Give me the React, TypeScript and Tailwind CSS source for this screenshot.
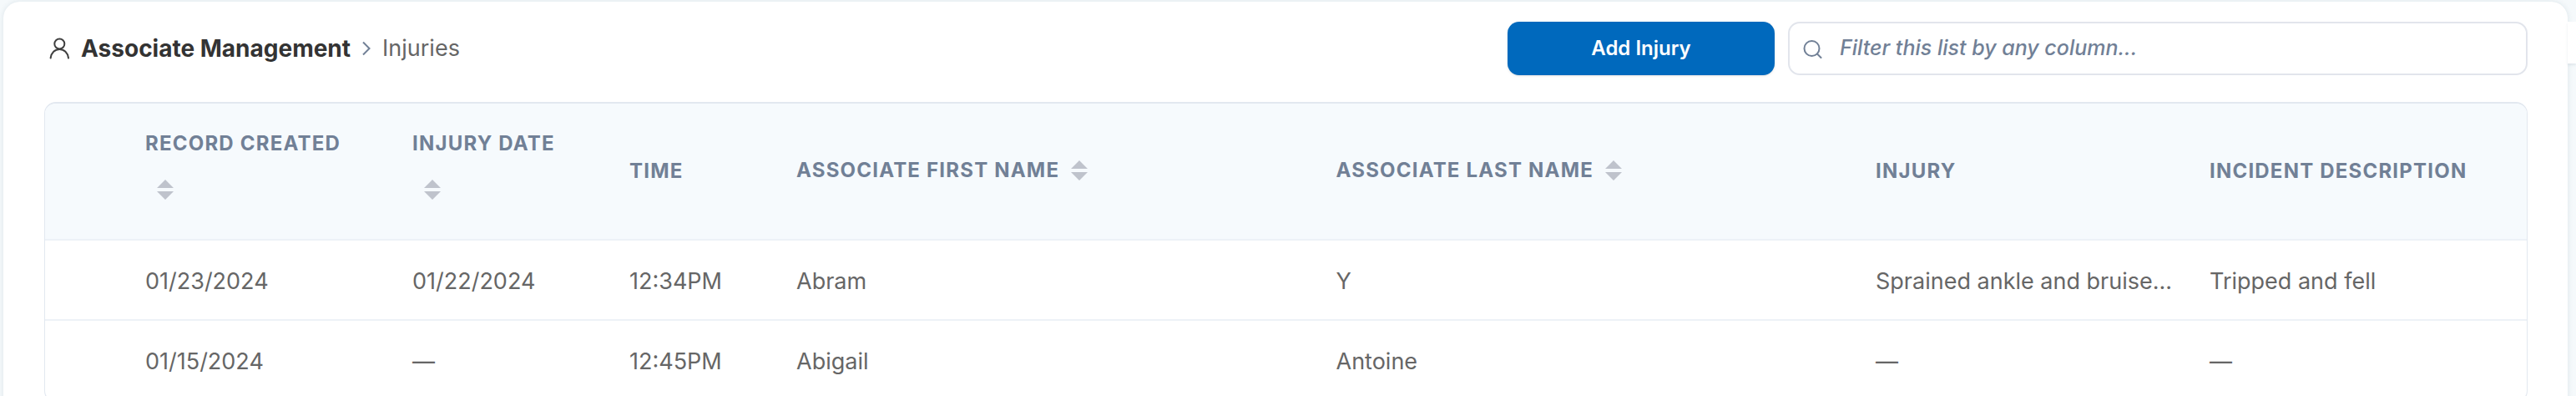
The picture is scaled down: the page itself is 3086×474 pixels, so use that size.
import { useState } from "react";

interface Injury {
  id: number;
  recordCreated: string;
  injuryDate: string;
  time: string;
  firstName: string;
  lastName: string;
  injury: string;
  description: string;
}

type ColumnKey = Exclude<keyof Injury, "id">;

interface Column {
  key: ColumnKey;
  label: string;
  width: string;
  sortable?: boolean;
}

const COLUMNS: Column[] = [
  { key: "recordCreated", label: "Record Created", width: "w-[320px]", sortable: true },
  { key: "injuryDate", label: "Injury Date", width: "w-[260px]", sortable: true },
  { key: "time", label: "Time", width: "w-[200px]" },
  { key: "firstName", label: "Associate First Name", width: "w-auto", sortable: true },
  { key: "lastName", label: "Associate Last Name", width: "w-auto", sortable: true },
  { key: "injury", label: "Injury", width: "w-[400px]" },
  { key: "description", label: "Incident Description", width: "w-[400px]" },
];

const INJURIES: Injury[] = [
  {
    id: 1,
    recordCreated: "01/23/2024",
    injuryDate: "01/22/2024",
    time: "12:34PM",
    firstName: "Abram",
    lastName: "Y",
    injury: "Sprained ankle and bruise...",
    description: "Tripped and fell",
  },
  {
    id: 2,
    recordCreated: "01/15/2024",
    injuryDate: "",
    time: "12:45PM",
    firstName: "Abigail",
    lastName: "Antoine",
    injury: "",
    description: "",
  },
];

function UserIcon() {
  return (
    <svg width="24" height="26" viewBox="0 0 24 26" fill="none" stroke="#3f3f3f" strokeWidth="2" aria-hidden="true">
      <circle cx="12.300" cy="7.500" r="6" />
      <path d="M1.600 24.500c.9-6.500 5.200-10.500 10.700-10.500s9.800 4 10.700 10.500" strokeLinecap="round" />
    </svg>
  );
}

function ChevronIcon() {
  return (
    <svg width="10" height="18" viewBox="0 0 10 18" fill="none" stroke="#718096" strokeWidth="2" aria-hidden="true">
      <path d="M1 1.500l7.500 7.500L1 16.500" />
    </svg>
  );
}

function SearchIcon() {
  return (
    <svg width="24" height="24" viewBox="0 0 24 24" fill="none" stroke="#718096" strokeWidth="2" aria-hidden="true">
      <circle cx="10.500" cy="12" r="9" />
      <path d="M17 18.500l4.500 4.500" strokeLinecap="round" />
    </svg>
  );
}

function SortIcon() {
  return (
    <svg width="20" height="24" viewBox="0 0 20 24" fill="#bfc3cc" aria-hidden="true">
      <path d="M10 0l10 10H0zM10 24L0 14h20z" />
    </svg>
  );
}

export default function App() {
  const [filter, setFilter] = useState("");
  const [sortKey, setSortKey] = useState<ColumnKey | null>(null);

  const rows = INJURIES.filter((row) =>
    COLUMNS.some(({ key }) => row[key].toLowerCase().includes(filter.toLowerCase()))
  );
  if (sortKey) {
    rows.sort((a, b) => a[sortKey].localeCompare(b[sortKey]));
  }

  return (
    <div className="relative h-screen overflow-hidden bg-[#f5f9fb] pt-0.5 pr-2.5 pl-1 font-['Inter',sans-serif] text-[27px] text-[#666666]">
      <main className="min-h-screen rounded-[20px] bg-white pt-6 pr-12 pb-12 pl-[49px] shadow-[0_0_6px_rgba(45,80,110,0.12)]">
        {/* Breadcrumb and actions */}
        <header className="flex items-center gap-4">
          <nav aria-label="Breadcrumb" className="flex flex-1 items-center gap-3.5 pl-1.5">
            <UserIcon />
            <a href="#associates" className="text-[28px] font-bold text-[#333333]">
              Associate Management
            </a>
            <ChevronIcon />
            <span>Injuries</span>
          </nav>
          <button
            type="button"
            className="h-16 w-80 rounded-[14px] bg-[#0069bd] text-[24px] font-semibold text-white shadow-sm"
          >
            Add Injury
          </button>
          <label className="flex h-16 w-[886px] items-center gap-5 rounded-[14px] border-2 border-[#e2e5ec] px-4">
            <SearchIcon />
            <input
              type="text"
              aria-label="Filter this list by any column"
              placeholder="Filter this list by any column..."
              value={filter}
              onChange={(e) => setFilter(e.target.value)}
              className="min-w-0 flex-1 bg-transparent text-[25px] font-medium outline-none placeholder:text-[#718096] placeholder:italic"
            />
          </label>
        </header>

        {/* Injury list */}
        <div className="mt-8 overflow-hidden rounded-[14px] border-x border-y-2 border-[#e2e8f0]">
          <table className="w-full table-fixed border-separate border-spacing-0 text-left">
            <thead className="bg-[#f6fafd] text-[24px] leading-9 text-[#718096]">
              <tr>
                <th className="w-[100px] border-b-2 border-[#edf2f7]" />
                {COLUMNS.map(({ key, label, width, sortable }) => (
                  <th key={key} className={`${width} border-b-2 border-[#edf2f7] px-5 font-bold`}>
                    {sortable ? (
                      <button
                        type="button"
                        onClick={() => setSortKey(key)}
                        className="flex flex-wrap items-center gap-y-2.5 pt-[30px] pb-8 tracking-wider uppercase"
                      >
                        {label}
                        <span className="mr-5 ml-3.5 flex h-[54px] items-center">
                          <SortIcon />
                        </span>
                      </button>
                    ) : (
                      <span className="tracking-wider uppercase">{label}</span>
                    )}
                  </th>
                ))}
              </tr>
            </thead>
            <tbody>
              {rows.map((row) => (
                <tr key={row.id}>
                  <td className="border-b-2 border-[#edf2f7]" />
                  {COLUMNS.map(({ key }) => (
                    <td key={key} className="h-24 truncate border-b-2 border-[#edf2f7] px-5 pt-1">
                      {row[key] || "—"}
                    </td>
                  ))}
                </tr>
              ))}
            </tbody>
          </table>
        </div>
      </main>

      {/* Drawer handle at the window's edge */}
      <div className="absolute top-[26px] right-0 h-[50px] w-2.5 bg-white shadow-[0_2px_3px_rgba(45,80,110,0.1)]" />
    </div>
  );
}
